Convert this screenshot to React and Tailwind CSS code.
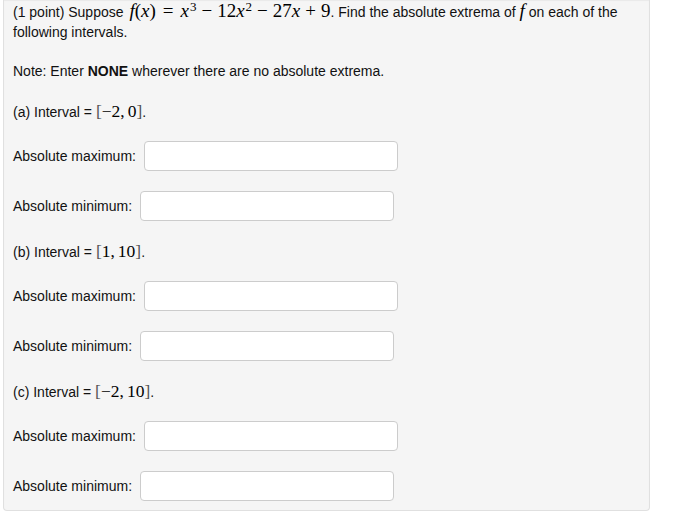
import React from "react";

const Sup = ({ children }) => (
  <span className="relative -top-[6px] ml-[1px] text-[13px] leading-none not-italic">{children}</span>
);

const I = ({ children }) => <span className="italic">{children}</span>;

const Op = ({ children, w = "mx-[5px]" }) => <span className={w}>{children}</span>;

const Math = ({ children, size = "text-[17.5px]" }) => (
  <span className={`font-['Liberation_Serif','DejaVu_Serif',serif] ${size} text-black`}>{children}</span>
);

const Interval = ({ a, b }) => (
  <Math>
    <span className="text-[#555] font-light">[</span>
    {a}
    <span className="mr-[3px]">,</span>
    {b}
    <span className="text-[#555] font-light">]</span>
  </Math>
);

const Row = ({ label }) => (
  <div className="flex h-[30px] items-center">
    <span>{label}</span>
    <input
      type="text"
      className="ml-[8px] h-[30px] w-[254px] rounded-[4px] border border-[#cccccc] bg-white outline-none"
    />
  </div>
);

const Section = ({ letter, a, b }) => (
  <div className="flex flex-col gap-[20px]">
    <div className="h-[20px]">
      ({letter}) Interval = <Interval a={a} b={b} />.
    </div>
    <Row label="Absolute maximum:" />
    <Row label="Absolute minimum:" />
  </div>
);

export default function App() {
  return (
    <div className="h-[521px] w-[678px] bg-white font-['Liberation_Sans',Arial,sans-serif] text-[14px] leading-[20px] text-[#111]">
      <div className="ml-[3px] w-[647px] rounded-b-[4px] border-x border-b border-[#e0e0e0] bg-[#f5f5f5] pb-[9px] pl-[9px] pr-[9px] pt-[1px] shadow-[inset_0_1px_1px_rgba(0,0,0,0.05)]">
        <div className="whitespace-nowrap">
          (1 point) Suppose{" "}
          <Math size="text-[19px]">
            <span className="ml-[2px]" />
            <I>f</I>(<I>x</I>)<Op w="mx-[7px]">=</Op>
            <I>x</I>
            <Sup>3</Sup>
            <Op>−</Op>12<I>x</I>
            <Sup>2</Sup>
            <Op>−</Op>27<I>x</I>
            <Op>+</Op>9
          </Math>
          . Find the absolute extrema of <Math size="text-[19px]"><I>f</I></Math> on each of the
          <br />
          following intervals.
        </div>
        <div className="h-[19px]" />
        <div>
          Note: Enter <b>NONE</b> wherever there are no absolute extrema.
        </div>
        <div className="h-[20px]" />
        <div className="flex flex-col gap-[20px]">
          <Section letter="a" a="−2" b="0" />
          <Section letter="b" a="1" b="10" />
          <Section letter="c" a="−2" b="10" />
        </div>
      </div>
    </div>
  );
}
